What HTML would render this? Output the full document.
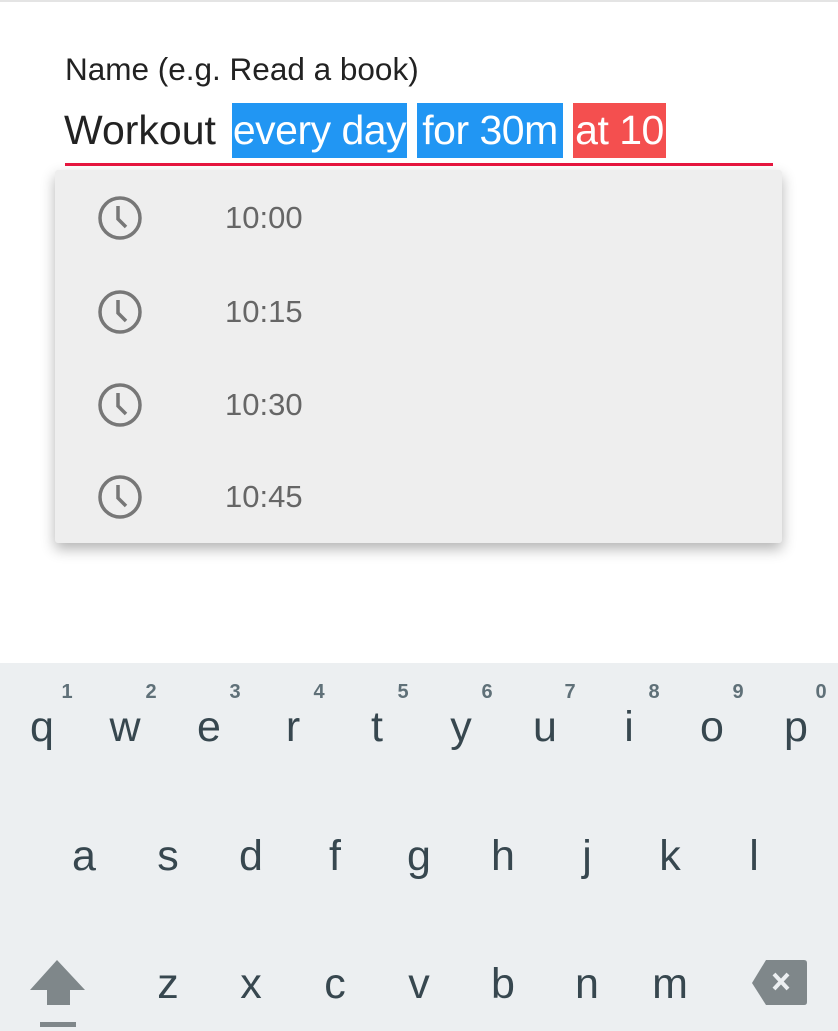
<!DOCTYPE html><html><head><style>
body{margin:0;width:838px;height:1031px;background:#fff;position:relative;overflow:hidden;font-family:"Liberation Sans",Roboto,sans-serif}
.a{position:absolute}
.lbl{left:65px;top:51px;font-size:31.5px;color:#222}
.inp{top:103px;font-size:41px;color:#222;white-space:nowrap;line-height:55px;height:55px}
.hl{color:#fff;text-align:center;letter-spacing:-0.5px}
.dd{left:55px;top:170px;width:727px;height:373px;background:#eee;border-radius:3px;box-shadow:0 6px 14px rgba(0,0,0,.3)}
.it{font-size:31px;color:#666}
.kb{left:0;top:663px;width:838px;height:368px;background:#eceff1}
.k{position:absolute;font-size:43px;color:#37474f;transform:translateX(-50%);line-height:1}
.n{position:absolute;font-size:20px;font-weight:bold;color:#5f7078;transform:translateX(-50%);line-height:1}
</style></head><body>
<div class="a" style="left:0;top:0;width:838px;height:2px;background:#e4e4e4"></div>
<div class="a lbl">Name (e.g. Read a book)</div>
<div class="a inp" style="left:64px">Workout</div>
<div class="a inp hl" style="left:232px;width:175px;background:#2196f3">every day</div>
<div class="a inp hl" style="left:417px;width:146px;background:#2196f3">for 30m</div>
<div class="a inp hl" style="left:573px;width:93px;background:#f44f4f">at 10</div>
<div class="a" style="left:65px;top:163px;width:708px;height:3px;background:#e8173f"></div>
<div class="a dd"></div>
<svg class="a" style="left:0;top:0" width="838" height="560">
<g fill="none" stroke="#777" stroke-width="3.5">
<circle cx="120" cy="218" r="20"/><path d="M118 206v13l8 8"/>
<circle cx="120" cy="312" r="20"/><path d="M118 300v13l8 8"/>
<circle cx="120" cy="405" r="20"/><path d="M118 393v13l8 8"/>
<circle cx="120" cy="497" r="20"/><path d="M118 485v13l8 8"/>
</g></svg>
<div class="a it" style="left:225px;top:200px">10:00</div>
<div class="a it" style="left:225px;top:294px">10:15</div>
<div class="a it" style="left:225px;top:387px">10:30</div>
<div class="a it" style="left:225px;top:479px">10:45</div>
<div class="a kb">
<div class="n" style="left:67px;top:19px">1</div><div class="n" style="left:151px;top:19px">2</div><div class="n" style="left:235px;top:19px">3</div><div class="n" style="left:319px;top:19px">4</div><div class="n" style="left:403px;top:19px">5</div><div class="n" style="left:487px;top:19px">6</div><div class="n" style="left:570px;top:19px">7</div><div class="n" style="left:654px;top:19px">8</div><div class="n" style="left:738px;top:19px">9</div><div class="n" style="left:821px;top:19px">0</div>
<div class="k" style="left:42px;top:43px">q</div><div class="k" style="left:125px;top:43px">w</div><div class="k" style="left:209px;top:43px">e</div><div class="k" style="left:293px;top:43px">r</div><div class="k" style="left:377px;top:43px">t</div><div class="k" style="left:461px;top:43px">y</div><div class="k" style="left:545px;top:43px">u</div><div class="k" style="left:629px;top:43px">i</div><div class="k" style="left:712px;top:43px">o</div><div class="k" style="left:796px;top:43px">p</div>
<div class="k" style="left:84px;top:172px">a</div><div class="k" style="left:168px;top:172px">s</div><div class="k" style="left:251px;top:172px">d</div><div class="k" style="left:335px;top:172px">f</div><div class="k" style="left:419px;top:172px">g</div><div class="k" style="left:503px;top:172px">h</div><div class="k" style="left:587px;top:172px">j</div><div class="k" style="left:670px;top:172px">k</div><div class="k" style="left:754px;top:172px">l</div>
<div class="k" style="left:168px;top:300px">z</div><div class="k" style="left:251px;top:300px">x</div><div class="k" style="left:335px;top:300px">c</div><div class="k" style="left:419px;top:300px">v</div><div class="k" style="left:503px;top:300px">b</div><div class="k" style="left:587px;top:300px">n</div><div class="k" style="left:670px;top:300px">m</div>
<svg class="a" style="left:0;top:280px" width="838" height="88">
<path d="M57 17L85 47H70V62H47V47H30Z" fill="#7f878a"/>
<rect x="40" y="79" width="36" height="5" fill="#7f878a"/>
<path d="M766 17H804Q807 17 807 20V59Q807 62 804 62H766L752 40Z" fill="#7f878a"/>
<path d="M774 31l14 15M788 31l-14 15" stroke="#eceff1" stroke-width="4"/>
</svg>
</div>
</body></html>
